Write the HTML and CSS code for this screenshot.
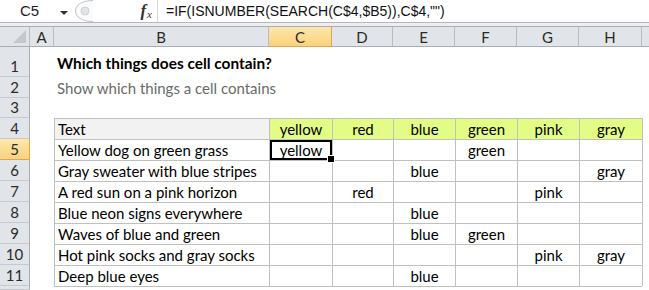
FILE: index.html
```html
<!DOCTYPE html>
<html lang="en">

<head>
    <meta charset="UTF-8">
    <meta name="viewport" content="width=device-width, initial-scale=1.0">
    <title>Which things does cell contain</title>
    <link rel="stylesheet" href="styles.css">
</head>

<body>
    <!-- formula bar -->
    <div class="fbar">
        <div class="namebox"><span class="ref">C5</span><span class="drop"></span></div>
        <div class="knob">
            <svg width="20" height="22" viewBox="0 0 20 22">
                <path d="M19 0.5 C8 0.5 1.5 5 1.5 11 C1.5 17 8 21.5 19 21.5" fill="#fbfbfc" stroke="#bfc3c8" />
                <circle cx="11" cy="11" r="4" fill="#e3e5e8" stroke="#cdd0d4" />
            </svg>
        </div>
        <div class="fx"><span class="f">f</span><span class="x">x</span></div>
        <div class="formula">=IF(ISNUMBER(SEARCH(C$4,$B5)),C$4,"")</div>
    </div>
    <div class="strip"></div>

    <!-- sheet -->
    <div class="sheet">
        <div class="hd corner"><span class="tri"></span></div>
        <div class="hd col">A</div>
        <div class="hd col">B</div>
        <div class="hd col sel">C</div>
        <div class="hd col">D</div>
        <div class="hd col">E</div>
        <div class="hd col">F</div>
        <div class="hd col">G</div>
        <div class="hd col">H</div>
        <div class="hd col"></div>

        <div class="hd row">1</div>
        <div class="cell"></div>
        <div class="cell title">Which things does cell contain?</div>
        <div class="cell"></div><div class="cell"></div><div class="cell"></div><div class="cell"></div><div class="cell"></div><div class="cell"></div><div class="cell"></div>

        <div class="hd row">2</div>
        <div class="cell"></div>
        <div class="cell sub">Show which things a cell contains</div>
        <div class="cell"></div><div class="cell"></div><div class="cell"></div><div class="cell"></div><div class="cell"></div><div class="cell"></div><div class="cell"></div>

        <div class="hd row">3</div>
        <div class="cell"></div><div class="cell"></div>
        <div class="cell"></div><div class="cell"></div><div class="cell"></div><div class="cell"></div><div class="cell"></div><div class="cell"></div><div class="cell"></div>

        <div class="hd row">4</div>
        <div class="cell"></div>
        <div class="cell tb head">Text</div>
        <div class="cell tb mid green">yellow</div>
        <div class="cell tb mid green">red</div>
        <div class="cell tb mid green">blue</div>
        <div class="cell tb mid green">green</div>
        <div class="cell tb mid green">pink</div>
        <div class="cell tb mid green">gray</div>
        <div class="cell tb-end"></div>

        <div class="hd row sel">5</div>
        <div class="cell"></div>
        <div class="cell tb">Yellow dog on green grass</div>
        <div class="cell tb mid active">yellow</div>
        <div class="cell tb mid"></div>
        <div class="cell tb mid"></div>
        <div class="cell tb mid">green</div>
        <div class="cell tb mid"></div>
        <div class="cell tb mid"></div>
        <div class="cell tb-end"></div>

        <div class="hd row">6</div>
        <div class="cell"></div>
        <div class="cell tb">Gray sweater with blue stripes</div>
        <div class="cell tb mid"></div>
        <div class="cell tb mid"></div>
        <div class="cell tb mid">blue</div>
        <div class="cell tb mid"></div>
        <div class="cell tb mid"></div>
        <div class="cell tb mid">gray</div>
        <div class="cell tb-end"></div>

        <div class="hd row">7</div>
        <div class="cell"></div>
        <div class="cell tb">A red sun on a pink horizon</div>
        <div class="cell tb mid"></div>
        <div class="cell tb mid">red</div>
        <div class="cell tb mid"></div>
        <div class="cell tb mid"></div>
        <div class="cell tb mid">pink</div>
        <div class="cell tb mid"></div>
        <div class="cell tb-end"></div>

        <div class="hd row">8</div>
        <div class="cell"></div>
        <div class="cell tb">Blue neon signs everywhere</div>
        <div class="cell tb mid"></div>
        <div class="cell tb mid"></div>
        <div class="cell tb mid">blue</div>
        <div class="cell tb mid"></div>
        <div class="cell tb mid"></div>
        <div class="cell tb mid"></div>
        <div class="cell tb-end"></div>

        <div class="hd row">9</div>
        <div class="cell"></div>
        <div class="cell tb">Waves of blue and green</div>
        <div class="cell tb mid"></div>
        <div class="cell tb mid"></div>
        <div class="cell tb mid">blue</div>
        <div class="cell tb mid">green</div>
        <div class="cell tb mid"></div>
        <div class="cell tb mid"></div>
        <div class="cell tb-end"></div>

        <div class="hd row">10</div>
        <div class="cell"></div>
        <div class="cell tb">Hot pink socks and gray socks</div>
        <div class="cell tb mid"></div>
        <div class="cell tb mid"></div>
        <div class="cell tb mid"></div>
        <div class="cell tb mid"></div>
        <div class="cell tb mid">pink</div>
        <div class="cell tb mid">gray</div>
        <div class="cell tb-end"></div>

        <div class="hd row">11</div>
        <div class="cell"></div>
        <div class="cell tb">Deep blue eyes</div>
        <div class="cell tb mid"></div>
        <div class="cell tb mid"></div>
        <div class="cell tb mid">blue</div>
        <div class="cell tb mid"></div>
        <div class="cell tb mid"></div>
        <div class="cell tb mid"></div>
        <div class="cell tb-end"></div>

        <div class="hd row"></div>
        <div class="cell"></div>
        <div class="cell tb-close"></div><div class="cell tb-close"></div><div class="cell tb-close"></div><div class="cell tb-close"></div><div class="cell tb-close"></div><div class="cell tb-close"></div><div class="cell tb-close"></div>
        <div class="cell"></div>
    </div>
</body>

</html>
```

FILE: styles.css
```css
* {
    margin: 0;
    padding: 0;
    box-sizing: border-box;
}

html,
body {
    width: 649px;
    height: 290px;
    overflow: hidden;
    background-color: #fff;
}

body {
    font-family: Lato, "Liberation Sans", sans-serif;
    color: #000;
}

/* formula bar */
.fbar {
    height: 23px;
    display: flex;
    background-color: #fff;
    border-bottom: 1px solid #b4b9c0;
}

.namebox {
    width: 74px;
    position: relative;
    font-family: "Liberation Sans", sans-serif;
    font-size: 15px;
    line-height: 22px;
    color: #1e1e1e;
}

.namebox .ref {
    position: absolute;
    left: 20px;
    top: 0;
}

.namebox .drop {
    position: absolute;
    left: 60px;
    top: 11px;
    border-left: 4px solid transparent;
    border-right: 4px solid transparent;
    border-top: 4px solid #333;
}

.knob {
    width: 20px;
}

.knob svg {
    display: block;
}

.fx {
    width: 64px;
    border-right: 1px solid #d3d6db;
    display: flex;
    justify-content: flex-end;
    align-items: center;
    padding-right: 5px;
    font-family: "Liberation Serif", serif;
    font-style: italic;
    color: #333;
}

.fx .f {
    font-size: 17px;
    font-weight: bold;
}

.fx .x {
    font-size: 11px;
    margin-top: 5px;
    margin-left: 1px;
}

.formula {
    padding-left: 8px;
    font-family: "Liberation Sans", sans-serif;
    font-size: 14px;
    line-height: 22px;
    white-space: nowrap;
    color: #111;
}

.strip {
    height: 4px;
    background-color: #eceef1;
    border-bottom: 1px solid #a9aeb5;
}

/* grid */
.sheet {
    display: grid;
    grid-template-columns: 30px 24px 215px 63px 61px 62px 62px 62px 63px 60px;
    grid-template-rows: 20px 30px 21px 20px repeat(8, 21px) 4px;
}

.hd {
    background-color: #e1e4e8;
    color: #2a2a2a;
    font-size: 15px;
    display: flex;
    align-items: center;
    justify-content: center;
}

.hd.col {
    border-right: 1px solid #b7bcc2;
    border-bottom: 1px solid #a9aeb5;
    padding-top: 1px;
}

.hd.row {
    border-right: 1px solid #a9aeb5;
    border-bottom: 1px solid #c6cacf;
    align-items: flex-end;
    padding-bottom: 1px;
}

.hd.sel {
    background: linear-gradient(#fde7a9, #f9d27e);
    border-color: #e1a74a;
}

.hd.corner {
    position: relative;
    border-right: 1px solid #b7bcc2;
    border-bottom: 1px solid #a9aeb5;
}

.tri {
    position: absolute;
    right: 3px;
    bottom: 3px;
    border-left: 13px solid transparent;
    border-bottom: 13px solid #c3c8ce;
}

.cell {
    display: flex;
    align-items: flex-end;
    padding: 0 3px 1px;
    font-size: 15px;
    line-height: 18px;
    white-space: nowrap;
}

.title {
    font-weight: bold;
    font-size: 15.4px;
    padding-bottom: 5px;
}

.sub {
    color: #6a6a6a;
}

.tb {
    border-left: 1px solid #c0c0c0;
    border-top: 1px solid #c0c0c0;
}

.tb-end {
    border-left: 1px solid #c0c0c0;
}

.tb-close {
    border-top: 1px solid #c0c0c0;
}

.mid {
    justify-content: center;
}

.green {
    background-color: #e3fc86;
}

.head {
    background-color: #f2f2f2;
}

.active {
    position: relative;
    z-index: 1;
    box-shadow: inset 0 0 0 2px #000;
}

.active::after {
    content: "";
    position: absolute;
    right: -3px;
    bottom: -3px;
    width: 6px;
    height: 6px;
    background-color: #000;
    border: 1px solid #fff;
}
```
